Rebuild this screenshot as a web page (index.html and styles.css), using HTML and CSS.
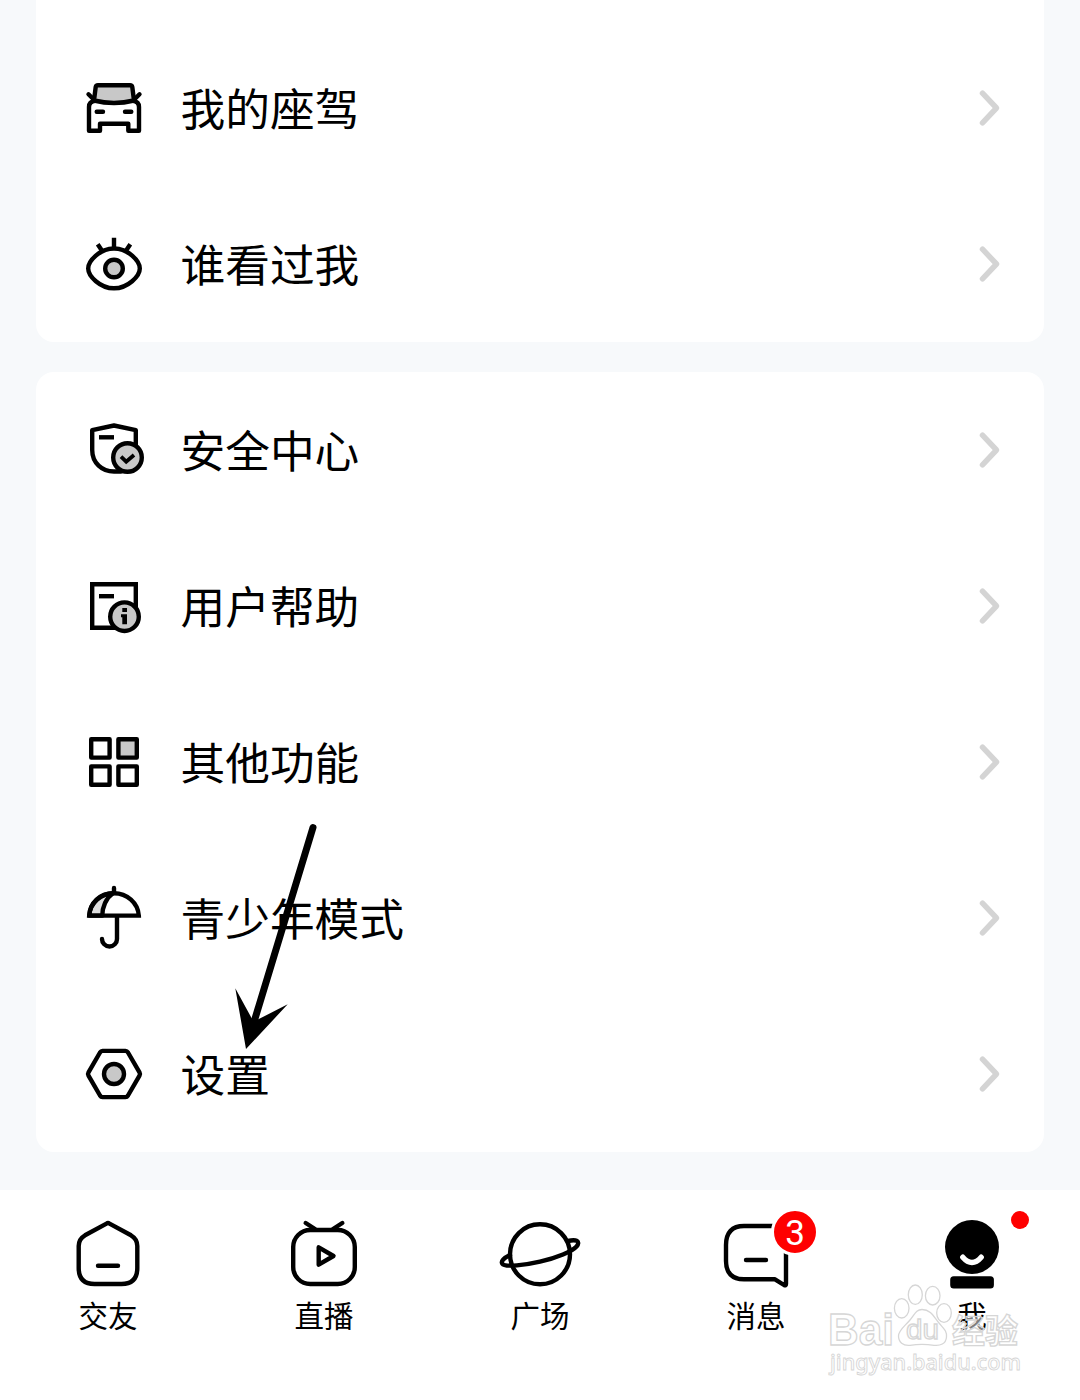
FILE: index.html
```html
<!DOCTYPE html>
<html lang="zh-CN">
<head>
    <meta charset="UTF-8">
    <meta name="viewport" content="width=device-width, initial-scale=1.0">
    <title>我</title>
    <link rel="stylesheet" href="styles.css">
</head>
<body>
    <svg class="defs" width="0" height="0">
        <symbol id="chevron" viewBox="0 0 24 40">
            <path d="M5.5 5.2 19.5 20 5.5 34.8"/>
        </symbol>
    </svg>

    <main class="content">
        <section class="card card-top">
            <a class="row">
                <svg class="icon" viewBox="0 0 72 72">
                    <path class="shade" d="M20 13.2H52Q54 13.2 54.3 15L56 28.5Q36 33.5 16 28.5L17.7 15Q18 13.2 20 13.2Z"/>
                    <path d="M17 28.7Q11 29.5 11 35V58.7H22V51.7H50.3V58.7H61V35Q61 29.5 55 28.7M10.5 22.3 15 26.7M61.5 22.3 57 26.7M18.7 39.7H25M47 39.7H53.3"/>
                </svg>
                <span class="label">我的座驾</span>
                <svg class="chevron"><use href="#chevron"/></svg>
            </a>
            <a class="row">
                <svg class="icon" viewBox="0 0 72 72">
                    <path d="M10.2 40.5C10.2 33 22 20.5 36 20.5S61.8 33 61.8 40.5 50 60.3 36 60.3 10.2 48 10.2 40.5Z"/>
                    <path class="butt" d="M36 9.7V20M19.7 16.3 24.2 23M52.3 16.3 47.8 23"/>
                    <circle class="shade" cx="36" cy="40.5" r="8.8"/>
                </svg>
                <span class="label">谁看过我</span>
                <svg class="chevron"><use href="#chevron"/></svg>
            </a>
        </section>

        <section class="card">
            <a class="row">
                <svg class="icon" viewBox="0 0 72 72">
                    <path d="M57.8 32V16.2L36 11.5 14.2 16.2V36C14.2 49 24 57.5 36 57.5H43"/>
                    <path class="butt" d="M21 23.3H36"/>
                    <circle class="shade" cx="49.5" cy="43.5" r="14.3"/>
                    <path class="butt thin" d="M43 42.7 48.2 47.7 56 41"/>
                </svg>
                <span class="label">安全中心</span>
                <svg class="chevron"><use href="#chevron"/></svg>
            </a>
            <a class="row">
                <svg class="icon" viewBox="0 0 72 72">
                    <path class="butt" d="M57.8 37V14.2H14.2V57.8H38"/>
                    <path class="butt" d="M21 26.2H36"/>
                    <circle class="shade" cx="46.5" cy="46.7" r="14.3"/>
                    <path class="solid" d="M44.3 38H49V42H44.3ZM43 44.3H49V54.3H44.3V47.3H43Z"/>
                </svg>
                <span class="label">用户帮助</span>
                <svg class="chevron"><use href="#chevron"/></svg>
            </a>
            <a class="row">
                <svg class="icon" viewBox="0 0 72 72">
                    <rect x="13.2" y="13.2" width="18.4" height="18.4"/>
                    <rect class="shade" x="40.4" y="13.2" width="18.4" height="18.4"/>
                    <rect x="13.2" y="40.4" width="18.4" height="18.4"/>
                    <rect x="40.4" y="40.4" width="18.4" height="18.4"/>
                </svg>
                <span class="label">其他功能</span>
                <svg class="chevron"><use href="#chevron"/></svg>
            </a>
            <a class="row">
                <svg class="icon" viewBox="0 0 72 72">
                    <path class="shade light" d="M11.2 33.6C12 21 22 11.2 35 11.2 28 16 24.3 25 24.3 33.6Z"/>
                    <path class="butt" d="M11.2 33.6C12 21 23 11.2 36 11.2S60 21 60.8 33.6Z"/>
                    <path d="M36 6V11M39 35V57A7.5 7.5 0 0 1 24 57"/>
                </svg>
                <span class="label">青少年模式</span>
                <svg class="chevron"><use href="#chevron"/></svg>
            </a>
            <a class="row">
                <svg class="icon" viewBox="0 0 72 72">
                    <path d="M24.5 12.9H47.5Q49 12.9 50 14.5L61.5 34.3Q62.5 36 61.5 37.7L50 57.5Q49 59.1 47.5 59.1H24.5Q23 59.1 22 57.5L10.5 37.7Q9.5 36 10.5 34.3L22 14.5Q23 12.9 24.5 12.9Z"/>
                    <circle class="shade" cx="36" cy="36" r="10"/>
                </svg>
                <span class="label">设置</span>
                <svg class="chevron"><use href="#chevron"/></svg>
            </a>
        </section>
    </main>

    <nav class="tabbar">
        <a class="tab">
            <svg class="tab-icon" viewBox="0 0 96 84">
                <path d="M46.5 11.6Q48 10.6 49.5 11.6L71 23.3Q77.3 27 77.3 34V56Q77.3 72 61.5 72H34.5Q18.7 72 18.7 56V34Q18.7 27 25 23.3ZM38 53.7H58"/>
            </svg>
            <span>交友</span>
        </a>
        <a class="tab">
            <svg class="tab-icon" viewBox="0 0 96 84">
                <rect x="17.2" y="18" width="61.6" height="54" rx="17"/>
                <path d="M29.7 11 39 17M66.3 11 57 17M42.7 35.3 57.5 44 42.7 52.7Z"/>
            </svg>
            <span>直播</span>
        </a>
        <a class="tab">
            <svg class="tab-icon" viewBox="0 0 96 84">
                <circle cx="48" cy="42.3" r="30"/>
                <path d="M18 43C12 46 8.6 49.2 10.3 51.7 13 55.6 34 53 48 49.7 65 46 80 39.5 84.5 34.5 89 29 84 27 76 29"/>
            </svg>
            <span>广场</span>
        </a>
        <a class="tab">
            <svg class="tab-icon" viewBox="0 0 96 84">
                <path d="M78 38V72Q78 74 76 73L67 67.3H36Q18 67.3 18 49V33Q18 14 36 14H70M38 48H58"/>
            </svg>
            <span>消息</span>
            <b class="badge">3</b>
        </a>
        <a class="tab">
            <svg class="tab-icon" viewBox="0 0 96 84">
                <circle class="solid" cx="48" cy="35" r="27"/>
                <rect class="solid" x="26.2" y="64.3" width="43.7" height="12.3" rx="3.5"/>
                <path class="smile" d="M38.8 45.2Q48 55.8 57.2 45.2"/>
            </svg>
            <span>我</span>
            <i class="dot"></i>
        </a>
    </nav>

    <svg class="arrow" viewBox="0 0 60 228">
        <path class="shaft" d="M81 6.5 22 201"/>
        <path class="head" d="M14 228 3.3 167.3 19.7 197.3 26.3 198.3 55.7 183.3Z"/>
    </svg>

    <svg class="watermark" viewBox="0 0 200 100">
        <ellipse cx="75.7" cy="28.3" rx="7.3" ry="9.7"/>
        <ellipse cx="89.3" cy="14.7" rx="7" ry="9.7"/>
        <ellipse cx="106.7" cy="15.7" rx="7.3" ry="9.3"/>
        <ellipse cx="118" cy="33" rx="7.3" ry="9.3"/>
        <path d="M96 29.5C105 29.5 108 37 113 43S121 51 120.5 57C120 64 114 66 108 65.3 100 64 92 64 84 65.3 77 66 72.5 62 72.5 56S79 46 84 40 90 29.5 96 29.5Z"/>
        <text class="brand" x="2" y="65" textLength="66" lengthAdjust="spacingAndGlyphs">Bai</text>
        <text class="du" x="80" y="59" textLength="33" lengthAdjust="spacingAndGlyphs">du</text>
        <text class="jy" x="126" y="63">经验</text>
        <text class="url" x="4" y="90" textLength="191" lengthAdjust="spacingAndGlyphs">jingyan.baidu.com</text>
    </svg>
</body>
</html>
```
FILE: styles.css
```css
body {
    margin: 0;
    position: relative;
    height: 1400px;
    overflow: hidden;
    display: flex;
    flex-direction: column;
    background: #f7f9fb;
    color: #000;
    font-family: "Noto Sans CJK SC", sans-serif;
}

.defs {
    position: absolute;
}

.content {
    display: flex;
    flex-direction: column;
    gap: 30px;
    height: 1190px;
    padding: 0 36px;
    box-sizing: border-box;
}

.card {
    background: #fff;
    border-radius: 18px;
}

.card-top {
    padding-top: 30px;
    border-radius: 0 0 18px 18px;
}

.row {
    display: flex;
    align-items: center;
    height: 156px;
    padding: 0 43px 0 42px;
    box-sizing: border-box;
}

.icon {
    width: 72px;
    height: 72px;
}

.icon,
.tab-icon {
    fill: none;
    stroke: #000;
    stroke-width: 4.4;
    stroke-linecap: round;
    stroke-linejoin: round;
}

.shade {
    fill: #c8c8c8;
}

.light {
    fill: #dedede;
}

.butt {
    stroke-linecap: butt;
    stroke-linejoin: miter;
}

.thin {
    stroke-width: 3.8;
}

.solid {
    fill: #000;
    stroke: none;
}

.label {
    flex: 1;
    margin-left: 30.5px;
    padding-bottom: 2px;
    font-size: 44.7px;
    line-height: 64px;
}

.chevron {
    width: 24px;
    height: 40px;
    fill: none;
    stroke: #d4d4d4;
    stroke-width: 5.5;
    stroke-linecap: round;
    stroke-linejoin: round;
}

/* bottom tab bar */
.tabbar {
    display: grid;
    grid-template-columns: repeat(5, 1fr);
    height: 210px;
    background: #fff;
}

.tab {
    position: relative;
    display: flex;
    flex-direction: column;
    align-items: center;
    padding-top: 22px;
    font-size: 29.5px;
    line-height: 37px;
}

.tab-icon {
    width: 96px;
    height: 84px;
}

.tab .smile {
    stroke: #fff;
    stroke-width: 5.4;
}

.badge {
    position: absolute;
    top: 18px;
    left: 123px;
    width: 42px;
    height: 42px;
    border: 3px solid #fff;
    border-radius: 50%;
    background: #fe0000;
    color: #fff;
    font: 400 35px/46px Roboto, sans-serif;
    text-align: center;
}

.dot {
    position: absolute;
    top: 21px;
    left: 147px;
    width: 18px;
    height: 18px;
    border-radius: 50%;
    background: #fe0000;
}

/* pointer to the settings row */
.arrow {
    position: absolute;
    top: 821px;
    left: 232px;
    width: 60px;
    height: 228px;
    overflow: visible;
}

.shaft {
    stroke: #000;
    stroke-width: 7;
    stroke-linecap: round;
}

.watermark {
    position: absolute;
    top: 1280px;
    left: 826px;
    width: 200px;
    height: 100px;
    fill: rgba(255, 255, 255, 0.5);
    stroke: #d6d6d6;
    stroke-width: 1.3;
    font-family: "Liberation Sans", sans-serif;
    font-weight: 700;
}

.brand {
    font-size: 45px;
}

.du {
    font-size: 27px;
    font-weight: 400;
}

.jy {
    font-family: "Noto Sans CJK SC", sans-serif;
    font-size: 33px;
}

.url {
    font-family: "Noto Sans", sans-serif;
    font-size: 22px;
    font-weight: 500;
    stroke-width: 0.9;
}
```
